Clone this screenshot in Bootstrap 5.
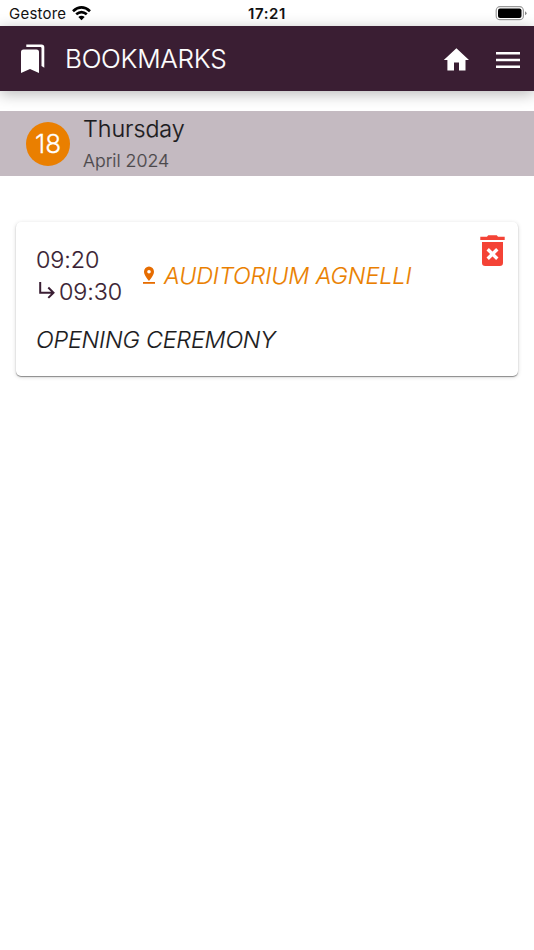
<!DOCTYPE html>
<html lang="en">
<head>
<meta charset="utf-8">
<meta name="viewport" content="width=device-width, initial-scale=1">
<title>Bookmarks</title>
<link href="https://cdn.jsdelivr.net/npm/bootstrap@5.3.0/dist/css/bootstrap.min.css" rel="stylesheet">
<style>
body{font-family:Inter,"Liberation Sans",sans-serif;color:#1b1b1d;min-height:950px;overflow:hidden}
svg{display:block;flex:none}
.status{height:26px;font-size:15px;line-height:28px;color:#111;padding:0 7px 0 9px}
.carrier{letter-spacing:.22px;width:62px}
.clock{font-weight:600;font-size:15px;letter-spacing:.6px;margin-left:-2px}
.side{flex:1 1 0}
.appbar{height:65px;background:#3a1e33;color:#fff;padding:0 14px 0 20px;box-shadow:0 3px 14px rgba(0,0,0,.28)}
.title{font-size:26px;font-weight:300;line-height:32px;margin:0 0 0 20px;letter-spacing:-.25px;-webkit-text-stroke:.15px}
.home{margin-right:25px}
.dayband{height:65px;margin-top:20px;background:#c4bac1;padding-left:26px}
.daynum{width:44px;height:44px;background:#ea7f00;color:#fff;font-size:26px;font-weight:300;line-height:44px;-webkit-text-stroke:.3px}
.daytext{margin-left:13px;padding-top:2px}
.weekday{font-size:23.3px;font-weight:300;line-height:32px;letter-spacing:-.05px;-webkit-text-stroke:.2px}
.month{font-size:17.8px;font-weight:300;line-height:31px;color:#4b484b;-webkit-text-stroke:.2px}
.event{margin:46px 16px 0 16px;height:154px;border-radius:5px;box-shadow:0 1px 1px rgba(0,0,0,.4),0 1px 4px rgba(0,0,0,.16);padding:22px 13px 0 20px}
.times,.place,.name{font-size:23.3px;font-weight:300;line-height:32px;-webkit-text-stroke:.15px}
.times{width:106px;color:#3a1e33;letter-spacing:-.1px}
.place{font-style:italic;color:#ea7f00;letter-spacing:-.08px}
.name{font-style:italic;letter-spacing:-.2px}
.trash{margin-top:-9px}
</style>
<script src="https://cdn.jsdelivr.net/npm/bootstrap@5.3.0/dist/js/bootstrap.bundle.min.js"></script>
</head>
<body class="bg-white">
<div class="status d-flex">
  <div class="side d-flex"><span class="carrier">Gestore</span>
    <svg width="22" height="26" viewBox="71 0 22 26"><g fill="none" stroke="#000" stroke-width="2.700"><path d="M73 11.200Q81.500 3.600 90 11.200"/><path d="M76.200 14.300Q81.500 9.800 86.800 14.300"/></g><path d="M78.300 17Q81.500 14.500 84.700 17L81.500 20.200Z"/></svg>
  </div>
  <span class="clock">17:21</span>
  <div class="side d-flex justify-content-end">
    <svg width="32" height="26" viewBox="495 0 32 26"><rect x="496.200" y="6.700" width="27.200" height="13" rx="3.800" fill="#fff" stroke="#999" stroke-width="1.200"/><rect x="498" y="8.500" width="23.500" height="9.500" rx="2"/><path d="M525 11.200q3.200 2 0 4z" fill="#888"/></svg>
  </div>
</div>
<nav class="appbar d-flex align-items-center">
  <svg width="25" height="30" viewBox="20 43.500 25 30" fill="#fff"><path d="M23.500 49H36.500Q39 49 39 51.500V72.500L30 68.600L21 72.500V51.500Q21 49 23.500 49Z"/><path d="M26.300 44H41.500Q44.300 44 44.300 46.800V67.200L41.500 65.600V47.700Q41.500 46.600 40.400 46.600H26.300Z"/></svg>
  <h1 class="title">BOOKMARKS</h1>
  <a href="#" class="ms-auto home" aria-label="Home"><svg width="26" height="24" viewBox="443 47 26 24" fill="#fff"><path d="M456.400 48.300L469 60H465.500V70.500H459V62.500H454V70.500H447.400V60H443.800Z"/></svg></a>
  <a href="#" aria-label="Menu"><svg width="26" height="22" viewBox="494 48 26 22" fill="#fff"><path d="M496 52h24v2.600h-24zM496 58.700h24v2.600h-24zM496 65.400h24V68h-24z"/></svg></a>
</nav>
<main>
  <section class="dayband d-flex align-items-center">
    <div class="daynum rounded-circle text-center">18</div>
    <div class="daytext"><div class="weekday">Thursday</div><div class="month">April 2024</div></div>
  </section>
  <article class="event bg-white">
    <div class="d-flex">
      <div class="times"><div>09:20</div><div class="d-flex"><svg width="23" height="32" viewBox="36 276 23 32" fill="none" stroke="#3a1e33" stroke-width="2"><path d="M40.200 282V292.700H53M48.300 287.500L53.500 292.700L48.300 297.900"/></svg><span>09:30</span></div></div>
      <div class="d-flex align-items-center place"><svg width="22" height="22" viewBox="142 265 22 22" fill="#e66c00"><path fill-rule="evenodd" d="M149 266.400A5 5.300 0 0 1 154 271.700C154 275.300 149 281 149 281S144 275.300 144 271.700A5 5.300 0 0 1 149 266.400ZM149 269.900A1.800 1.800 0 1 0 149 273.500A1.800 1.800 0 1 0 149 269.900Z"/><path d="M143 282h12v1.800h-12z"/></svg><span>AUDITORIUM AGNELLI</span></div>
      <a href="#" class="ms-auto trash" aria-label="Remove bookmark"><svg width="25" height="32" viewBox="480 235 25 32"><path fill="#f44336" d="M480.300 236.700H487L488.200 235.200H496.800L498 236.700H504.700V240H480.300ZM482 242H503V262.800Q503 266 499.800 266H485.200Q482 266 482 262.800Z"/><path d="M487.700 249.300l9.600 9.400M497.300 249.300l-9.600 9.400" stroke="#fff" stroke-width="3.400"/></svg></a>
    </div>
    <div class="name mt-3">OPENING CEREMONY</div>
  </article>
</main>
</body>
</html>
